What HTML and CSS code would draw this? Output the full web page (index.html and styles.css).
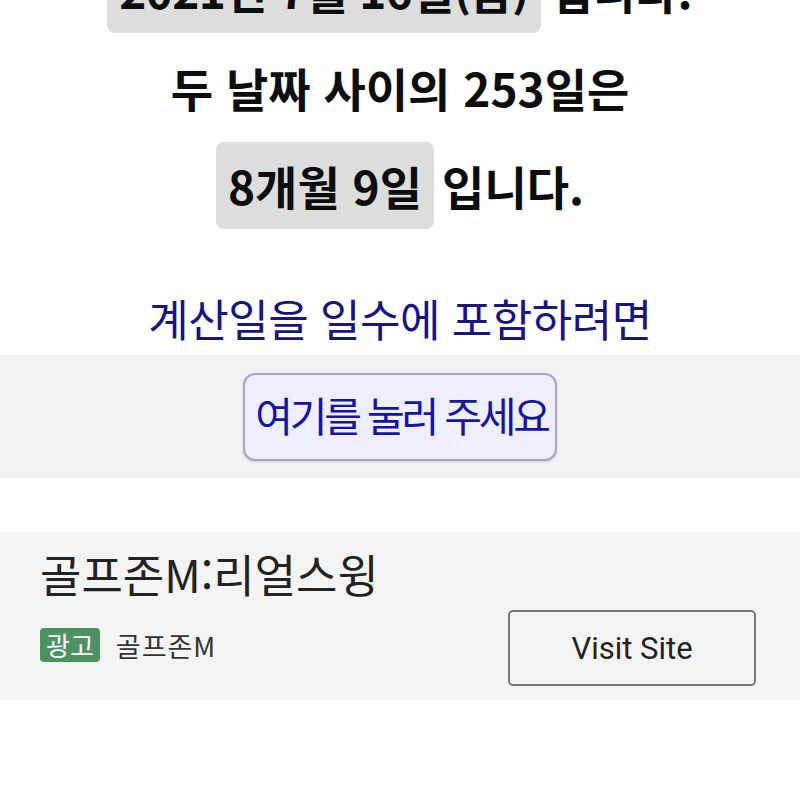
FILE: index.html
```html
<!DOCTYPE html>
<html lang="ko">
<head>
<meta charset="utf-8">
<link rel="stylesheet" href="styles.css">
</head>
<body>
<main class="result">
  <p class="line"><span class="hl hl-date">2021년 7월 16일(금)</span>입니다.</p>
  <p class="line">두 날짜 사이의 253일은</p>
  <p class="line"><span class="hl">8개월 9일</span>입니다.</p>
</main>
<p class="hint">계산일을 일수에 포함하려면</p>
<div class="band"><button class="press">여기를 눌러 주세요</button></div>
<section class="ad">
  <div class="ad-title">골프존M:리얼스윙</div>
  <div class="ad-row">
    <div class="ad-meta"><span class="badge">광고</span><span class="ad-brand">골프존M</span></div>
    <button class="visit">Visit Site</button>
  </div>
</section>
</body>
</html>
```
FILE: styles.css
```css
html, body {
  margin: 0;
  padding: 0;
  background: #ffffff;
}
body {
  font-family: "Noto Sans CJK KR", "Noto Sans", sans-serif;
  color: #111;
}
.result {
  margin-top: -60px;
}
.line {
  margin: 0;
  text-align: center;
  font-size: 46px;
  font-weight: 700;
  line-height: 98px;
  color: #0d0d0d;
}
.hl {
  display: inline-block;
  background: #dddddd;
  border-radius: 8px;
  padding: 0 12px;
  margin-right: 8px;
  line-height: 87px;
}
.hl-date {
  letter-spacing: -0.7px;
  margin-right: 10px;
}
.hint {
  margin: 54px 0 7px;
  text-align: center;
  font-size: 44px;
  letter-spacing: -0.5px;
  line-height: 60px;
  color: #16167e;
}
.band {
  background: #f2f2f2;
  padding: 18px 0 17px;
  display: flex;
  justify-content: center;
}
.press {
  font-family: "Noto Sans CJK KR", sans-serif;
  font-size: 41px;
  letter-spacing: -3.2px;
  color: #1515a2;
  background: #eeeefc;
  border: 2px solid #a4a4cc;
  border-radius: 12px;
  width: 314px;
  height: 88px;
  padding: 0 0 6px 3px;
  box-shadow: 0 1px 2px rgba(0,0,0,0.15);
}
.ad {
  margin-top: 54px;
  background: #f4f4f4;
  padding: 14px 44px 14px 40px;
}
.ad-title {
  font-size: 45px;
  line-height: 56px;
  color: #222;
}
.ad-row {
  margin-top: 8px;
  display: flex;
  justify-content: space-between;
  align-items: center;
}
.ad-meta {
  display: flex;
  align-items: center;
  gap: 16px;
  margin-top: -6px;
}
.badge {
  background: #4e9162;
  color: #fff;
  font-size: 26px;
  line-height: 34px;
  height: 34px;
  padding: 0 6px;
  border-radius: 4px;
}
.ad-brand {
  font-size: 27px;
  letter-spacing: 1px;
  color: #333;
}
.visit {
  width: 248px;
  height: 76px;
  border: 2px solid #777;
  border-radius: 5px;
  background: transparent;
  font-family: Roboto, "Noto Sans", sans-serif;
  font-size: 31px;
  color: #222;
  padding: 0;
}
```
